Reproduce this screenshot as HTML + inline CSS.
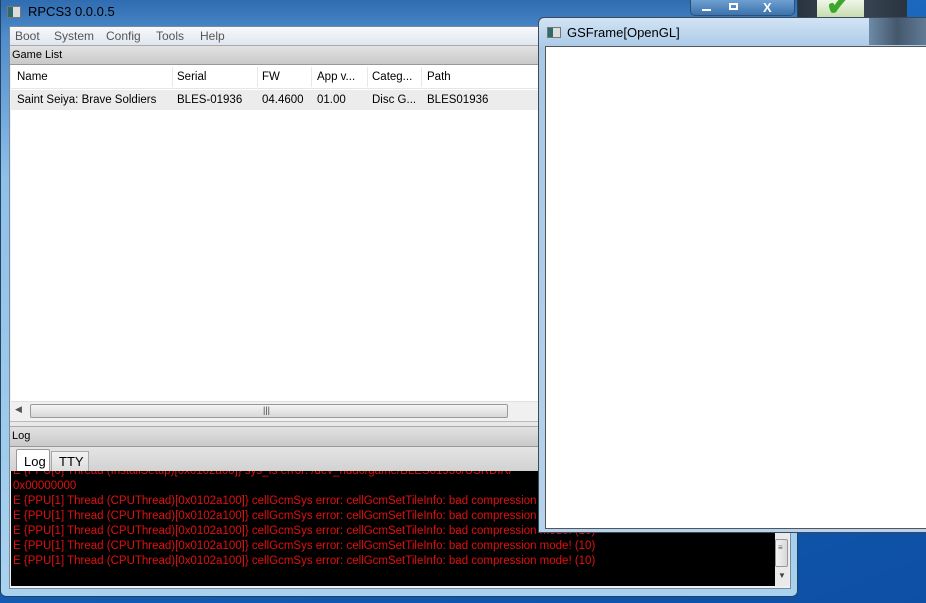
<!DOCTYPE html>
<html><head><meta charset="utf-8"><style>
*{margin:0;padding:0;box-sizing:border-box}
body{width:926px;height:603px;overflow:hidden;position:relative;font-family:"Liberation Sans",sans-serif;font-size:11.5px;background:linear-gradient(160deg,#2a7bd0 0%,#1560b8 50%,#0d4fa5 100%)}
.abs{position:absolute}
#main{left:0;top:0;width:798px;height:597px;background:linear-gradient(180deg,#2f6cb0 0%,#4f8ccc 6%,#8fc0e8 30%,#a9d2ee 100%);border:1px solid #23425f;border-top:none;border-radius:0 0 6px 6px}
#client{left:8px;top:26px;width:782px;height:563px;background:#f0f0f0;border:1px solid #7a8a9a}
.t{white-space:nowrap;position:absolute}
#menu{left:0;top:0;width:780px;height:18px;background:linear-gradient(#f7f9fc,#dfe6ef);color:#555;font-size:12px}
.hdr{background:linear-gradient(#e2e2e2,#c9c9c9);border-top:1px solid #aaa;border-bottom:1px solid #999}
#table{left:1px;top:38px;width:779px;height:355px;background:#fff}
.row{background:#ececec}
.log{background:#000;color:#e01010;font-size:11.5px;line-height:15px}
</style></head><body>
<div class="abs" style="left:797px;top:0;width:110px;height:17px;background:linear-gradient(90deg,#2a3440,#3a4856 50%,#2a3440)"></div>
<div class="abs" style="left:817px;top:0;width:47px;height:17px;background:linear-gradient(#f0f6e8,#c8dcb0)"></div>
<div class="t" style="left:826px;top:-12px;font-size:30px;color:#3ba82a;font-weight:bold">✔</div>
<div class="abs" id="main">
 <div class="abs" style="left:6px;top:6px;width:14px;height:12px;background:linear-gradient(90deg,#2d6a6a 40%,#ddd 40%);border:1px solid #777"></div>
 <div class="t" style="left:27px;top:4px;font-size:13px;color:#000">RPCS3 0.0.0.5</div>
 <div class="abs" style="left:689px;top:0;width:105px;height:16px;border:1px solid #2a4f78;border-top:none;border-radius:0 0 5px 5px;background:linear-gradient(#6e9fd0,#3b73ad)">
  <div class="abs" style="left:11px;top:9px;width:9px;height:2px;background:#fff"></div>
  <div class="abs" style="left:38px;top:3px;width:9px;height:7px;border:2px solid #fff"></div>
  <div class="t" style="left:72px;top:0;color:#fff;font-weight:bold;font-size:13px">X</div>
 </div>
 <div class="abs" id="client">
  <div class="abs" id="menu">
   <span class="t" style="left:5px;top:2px">Boot</span><span class="t" style="left:44px;top:2px">System</span><span class="t" style="left:96px;top:2px">Config</span><span class="t" style="left:146px;top:2px">Tools</span><span class="t" style="left:190px;top:2px">Help</span>
  </div>
  <div class="abs hdr" style="left:0;top:18px;width:780px;height:20px"><span class="t" style="left:2px;top:3px;font-size:11px">Game List</span></div>
  <div class="abs" id="table">
   <div class="abs" style="left:0;top:0;width:779px;height:24px;background:#fff;border-bottom:1px solid #e5e5e5"></div>
   <span class="t" style="left:6px;top:6px">Name</span>
   <span class="t" style="left:166px;top:6px">Serial</span>
   <span class="t" style="left:251px;top:6px">FW</span>
   <span class="t" style="left:306px;top:6px">App v...</span>
   <span class="t" style="left:361px;top:6px">Categ...</span>
   <span class="t" style="left:416px;top:6px">Path</span>
   <div class="abs" style="left:161px;top:2px;width:1px;height:20px;background:#e8e8e8"></div>
   <div class="abs" style="left:246px;top:2px;width:1px;height:20px;background:#e8e8e8"></div>
   <div class="abs" style="left:300px;top:2px;width:1px;height:20px;background:#e8e8e8"></div>
   <div class="abs" style="left:356px;top:2px;width:1px;height:20px;background:#e8e8e8"></div>
   <div class="abs" style="left:410px;top:2px;width:1px;height:20px;background:#e8e8e8"></div>
   <div class="abs row" style="left:0;top:25px;width:779px;height:20px"></div>
   <span class="t" style="left:6px;top:29px">Saint Seiya: Brave Soldiers</span>
   <span class="t" style="left:166px;top:29px">BLES-01936</span>
   <span class="t" style="left:251px;top:29px">04.4600</span>
   <span class="t" style="left:306px;top:29px">01.00</span>
   <span class="t" style="left:361px;top:29px">Disc G...</span>
   <span class="t" style="left:416px;top:29px">BLES01936</span>
   <div class="abs" style="left:0;top:336px;width:779px;height:19px;background:#f0f0f0;border-top:1px solid #e0e0e0">
    <span class="t" style="left:4px;top:2px;font-size:9px;color:#555">◀</span>
    <div class="abs" style="left:19px;top:2px;width:478px;height:14px;border:1px solid #999;border-radius:2px;background:linear-gradient(#f4f4f4,#d8d8d8)"><span class="t" style="left:232px;top:0;font-size:9px;color:#444">|||</span></div>
   </div>
  </div>
  <div class="abs" style="left:0;top:394px;width:780px;height:5px;background:#e8e8e8;border-top:1px solid #bbb"></div>
  <div class="abs hdr" style="left:0;top:399px;width:780px;height:21px"><span class="t" style="left:2px;top:3px;font-size:11px">Log</span></div>
  <div class="abs" style="left:0;top:420px;width:780px;height:24px;background:linear-gradient(#e4e4e4,#d2d2d2)">
   <div class="abs" style="left:6px;top:2px;width:34px;height:22px;background:#fff;border:1px solid #999;border-bottom:none;border-radius:2px 2px 0 0"><span class="t" style="left:7px;top:4px;font-size:13px">Log</span></div>
   <div class="abs" style="left:41px;top:4px;width:38px;height:20px;background:linear-gradient(#f2f2f2,#dcdcdc);border:1px solid #aaa;border-bottom:none"><span class="t" style="left:7px;top:2px;font-size:13px">TTY</span></div>
  </div>
  <div class="abs log" style="left:1px;top:444px;width:764px;height:115px;overflow:hidden">
   <div style="margin-top:-7px;padding-left:2px">
   E {PPU[0] Thread (InstallSetup)[0x0102a00]} sys_fs error: /dev_hdd0/game/BLES01936/USRDIR/<br>
   0x00000000<br>
   E {PPU[1] Thread (CPUThread)[0x0102a100]} cellGcmSys error: cellGcmSetTileInfo: bad compression mode! (10)<br>
   E {PPU[1] Thread (CPUThread)[0x0102a100]} cellGcmSys error: cellGcmSetTileInfo: bad compression mode! (10)<br>
   E {PPU[1] Thread (CPUThread)[0x0102a100]} cellGcmSys error: cellGcmSetTileInfo: bad compression mode! (10)<br>
   E {PPU[1] Thread (CPUThread)[0x0102a100]} cellGcmSys error: cellGcmSetTileInfo: bad compression mode! (10)<br>
   E {PPU[1] Thread (CPUThread)[0x0102a100]} cellGcmSys error: cellGcmSetTileInfo: bad compression mode! (10)
   </div>
  </div>
  <div class="abs" style="left:765px;top:444px;width:14px;height:115px;background:#eaeaea">
   <div class="abs" style="left:0;top:68px;width:13px;height:28px;border:1px solid #999;border-radius:2px;background:linear-gradient(90deg,#f4f4f4,#d8d8d8)"><span class="t" style="left:2px;top:6px;font-size:8px;line-height:3px;color:#555">≡</span></div>
   <span class="t" style="left:3px;top:100px;font-size:8px;color:#444">▼</span>
  </div>
 </div>
</div>
<div class="abs" style="left:538px;top:17px;width:400px;height:516px;background:linear-gradient(180deg,#d2e4f4 0%,#a8c8e6 6%,#b6d2ec 100%);border:1px solid #3a4a5a;border-radius:6px 0 0 0">
 <div class="abs" style="left:330px;top:0;width:70px;height:27px;background:linear-gradient(90deg,#6e8aa6,#44586c 40%,#6e8aa6)"></div>
 <div class="abs" style="left:8px;top:9px;width:14px;height:11px;background:linear-gradient(90deg,#2d6a6a 40%,#ddd 40%);border:1px solid #777"></div>
 <div class="t" style="left:28px;top:7px;font-size:13px;color:#000">GSFrame[OpenGL]</div>
 <div class="abs" style="left:6px;top:28px;width:394px;height:483px;background:#fff;border:1px solid #555"></div>
</div>
</body></html>
